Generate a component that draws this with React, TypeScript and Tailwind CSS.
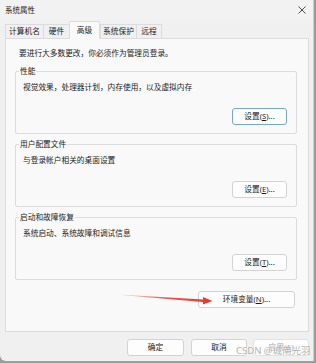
const tabs = [
  { label: "计算机名", w: "w-[38px]" },
  { label: "硬件", w: "w-[26px]" },
  { label: "高级", w: "w-[31px]", active: true },
  { label: "系统保护", w: "w-[36px]" },
  { label: "远程", w: "w-[26px]" },
]

type BtnProps = {
  children: React.ReactNode
  className?: string
  focused?: boolean
  disabled?: boolean
}

const Btn = ({ children, className, focused, disabled }: BtnProps) => (
  <div
    className={`${className} h-[17px] flex items-center justify-center rounded-[3px] border bg-[#fdfdfd] leading-[11px] ${
      focused ? "border-[#74a6d8]" : disabled ? "border-[#e2e2e2] bg-[#f6f6f6]" : "border-[#d3d3d3]"
    } ${disabled ? "text-[#a4a4a4]" : "text-[#1b1b1b]"}`}
  >
    {children}
  </div>
)

type GroupProps = {
  title: string
  desc: string
  button: React.ReactNode
  focused?: boolean
  className?: string
}

const Group = ({ title, desc, button, focused, className }: GroupProps) => (
  <fieldset
    className={`${className} w-[282px] border border-[#dcdcdc] rounded-[2px] pl-[7px] pr-[9px] pb-[8px]`}
  >
    <legend className="-ml-[4px] px-[1px] leading-[11px]">{title}</legend>
    <div className="mt-[5px] leading-[11px]">{desc}</div>
    <div className="mt-[15px] flex justify-end">
      <Btn className="w-[55px]" focused={focused}>
        {button}
      </Btn>
    </div>
  </fieldset>
)

const App = () => {
  return (
    <div className="relative w-[316px] h-[363px] overflow-hidden bg-[#9c9c9c] font-['Noto_Sans','Noto_Sans_CJK_SC',sans-serif] text-[7.7px] text-[#1b1b1b]">
      <div className="w-[314px] h-[361px] bg-[#f0f0f0] border-r border-[#c9c9c9] rounded-bl-[6px] flex flex-col">
        {/* title bar */}
        <div className="h-[20px] flex items-center justify-between pl-[5px] pr-[7px] bg-[#f2f2f3]">
          <span className="text-[7.5px] leading-[11px]">系统属性</span>
          <svg width="8" height="8" viewBox="0 0 8 8">
            <path d="M0.5 0.5 L7.5 7.5 M7.5 0.5 L0.5 7.5" stroke="#3a3a3a" strokeWidth="0.9" />
          </svg>
        </div>

        {/* tabs */}
        <div className="h-[18px] flex items-end pl-[5px]">
          {tabs.map((t, i) =>
            t.active ? (
              <div
                key={t.label}
                className={`${t.w} relative z-10 -mb-px h-[18px] flex items-center justify-center bg-[#f9f9f9] border-x border-t border-[#dcdcdc] rounded-t-[2px] leading-[11px]`}
              >
                {t.label}
              </div>
            ) : (
              <div
                key={t.label}
                className={`${t.w} h-[14px] flex items-center justify-center border-t border-l border-[#dcdcdc] bg-[#f0f0f0] leading-[11px] ${
                  i === tabs.length - 1 ? "border-r" : ""
                }`}
              >
                {t.label}
              </div>
            )
          )}
        </div>

        {/* tab panel */}
        <div className="ml-[5px] w-[304px] h-[294px] border border-[#dcdcdc] bg-[#f9f9f9] pt-[9px] pl-[9px]">
          <div className="pl-[4px] leading-[11px]">要进行大多数更改，你必须作为管理员登录。</div>
          <Group
            className="mt-[7px]"
            title="性能"
            desc="视觉效果，处理器计划，内存使用，以及虚拟内存"
            focused
            button={
              <>
                设置(<u>S</u>)...
              </>
            }
          />
          <Group
            className="mt-[5px]"
            title="用户配置文件"
            desc="与登录帐户相关的桌面设置"
            button={
              <>
                设置(<u>E</u>)...
              </>
            }
          />
          <Group
            className="mt-[5px]"
            title="启动和故障恢复"
            desc="系统启动、系统故障和调试信息"
            button={
              <>
                设置(<u>T</u>)...
              </>
            }
          />
          <div className="mt-[11px] w-[282px] pr-[2px] flex justify-end">
            <Btn className="w-[97px]">
              环境变量(<u>N</u>)...
            </Btn>
          </div>
        </div>

        {/* dialog buttons */}
        <div className="mt-[7px] flex justify-end pr-[4px]">
          <Btn className="w-[57px]">确定</Btn>
          <Btn className="w-[56px] ml-[7px]">取消</Btn>
          <Btn className="w-[56px] ml-[6px]" disabled>
            应用(<u>A</u>)
          </Btn>
        </div>
      </div>

      {/* red annotation arrow */}
      <svg className="absolute left-0 top-0 pointer-events-none" width="316" height="363">
        <defs>
          <linearGradient id="arrowFade" x1="123" y1="0" x2="212" y2="0" gradientUnits="userSpaceOnUse">
            <stop offset="0" stopColor="#e8362b" stopOpacity="0.15" />
            <stop offset="0.5" stopColor="#e8362b" stopOpacity="0.85" />
            <stop offset="1" stopColor="#e8362b" stopOpacity="1" />
          </linearGradient>
        </defs>
        <polygon
          points="123,294.7 203,299.4 203,297 212.5,300.9 203,304.6 203,302 123,295.3"
          fill="url(#arrowFade)"
        />
      </svg>

      {/* watermark */}
      <div className="absolute left-[236px] top-[345px] text-[9.5px] leading-[12px] text-[#b4b4b4] [text-shadow:0_0_2px_#ffffff]">
        CSDN @城南光羽
      </div>
    </div>
  )
}

export default App
